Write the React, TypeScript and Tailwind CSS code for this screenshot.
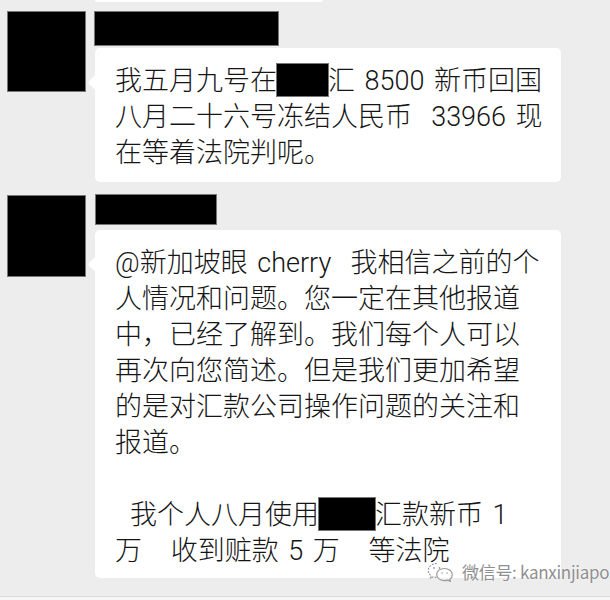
import type { ReactNode } from 'react'

// redacted inline name inside a message
function Redact({ w }: { w: number }) {
  return (
    <span
      className="inline-block h-[32px] bg-black align-[-6px] outline outline-1 outline-[#777]"
      style={{ width: w }}
    />
  )
}

function Bubble({ children, className = '' }: { children: ReactNode; className?: string }) {
  return (
    <div className={`relative w-[466px] rounded-[5px] bg-white px-[20px] pt-[15px] text-[27px] font-light leading-[36px] text-[#151515] [word-spacing:3px] ${className}`}>
      <div className="absolute left-[-5px] top-[29px] h-[11px] w-[11px] rotate-45 rounded-[2px] bg-white" />
      {children}
    </div>
  )
}

function Line({ children, indent = false }: { children: ReactNode; indent?: boolean }) {
  return <div className={`h-[36px] whitespace-pre ${indent ? 'pl-[15px]' : ''}`}>{children}</div>
}

function WeChatMark() {
  return (
    <svg width="27" height="20" viewBox="0 0 27 20" fill="none" stroke="#9a9a9a" strokeWidth="1.2">
      <path d="M10 1.5C5 1.5 1.2 4.7 1.2 8.5c0 2.2 1.2 4 3 5.3l-.7 2.4 2.8-1.4c1.1.3 2.3.5 3.6.5" strokeDasharray="2 1.2" />
      <path d="M17.5 6.5c4.3 0 7.8 2.8 7.8 6.3 0 1.9-1 3.5-2.6 4.6l.6 2-2.4-1.2c-1.1.3-2.2.5-3.4.5-4.3 0-7.8-2.8-7.8-6.3s3.5-5.9 7.8-5.9z" />
      <circle cx="7" cy="6" r="0.9" fill="#9a9a9a" stroke="none" />
      <circle cx="12.5" cy="6" r="0.9" fill="#9a9a9a" stroke="none" />
      <circle cx="15" cy="11" r="0.8" fill="#9a9a9a" stroke="none" />
      <circle cx="20" cy="11" r="0.8" fill="#9a9a9a" stroke="none" />
    </svg>
  )
}

export default function App() {
  return (
    <div className="relative h-[600px] w-[610px] overflow-hidden bg-[#ededed] font-['Roboto','Noto_Sans_CJK_SC',sans-serif]">
      {/* tail end of the previous message */}
      <div className="ml-[95px] h-[2px] w-[228px] rounded-b-[4px] bg-white" />

      {/* first message */}
      <div className="mt-[9px] flex items-start">
        <div className="ml-[7px] h-[81px] w-[79px] shrink-0 border border-[#777] bg-black" />
        <div className="ml-[9px]">
          <div className="-ml-px h-[35px] w-[185px] border border-[#777] bg-black" />
          <Bubble className="mt-[2px] pb-[11px]">
            <Line>
              我五月九号在<Redact w={51} />汇 8500 新币回国
            </Line>
            <Line>八月二十六号冻结人民币  33966 现</Line>
            <Line>在等着法院判呢。</Line>
          </Bubble>
        </div>
      </div>

      {/* second message */}
      <div className="mt-[13px] flex items-start">
        <div className="ml-[7px] h-[82px] w-[79px] shrink-0 border border-[#777] bg-black" />
        <div className="ml-[9px]">
          <div className="-mt-px h-[31px] w-[122px] border border-[#777] bg-black" />
          <Bubble className="mt-[5px] pb-[9px]">
            <Line>@新加坡眼 cherry  我相信之前的个</Line>
            <Line>人情况和问题。您一定在其他报道</Line>
            <Line>中，已经了解到。我们每个人可以</Line>
            <Line>再次向您简述。但是我们更加希望</Line>
            <Line>的是对汇款公司操作问题的关注和</Line>
            <Line>报道。</Line>
            <Line> </Line>
            <Line indent>
              我个人八月使用<Redact w={56} />汇款新币 1
            </Line>
            <Line>万   收到赃款 5 万   等法院</Line>
          </Bubble>
        </div>
      </div>

      <div className="mt-[18px] h-[4px] border-t border-[#dadada] bg-[#f6f6f6]" />

      {/* account watermark */}
      <div className="absolute left-[427px] top-[562px] flex items-center gap-[8px] whitespace-nowrap text-[17px] leading-[20px] text-[#8f8f8f] [text-shadow:0_0_2px_#fff]">
        <WeChatMark />
        <span className="font-['Noto_Sans_CJK_SC',sans-serif] tracking-[-0.3px]">微信号: kanxinjiapo</span>
      </div>
    </div>
  )
}
